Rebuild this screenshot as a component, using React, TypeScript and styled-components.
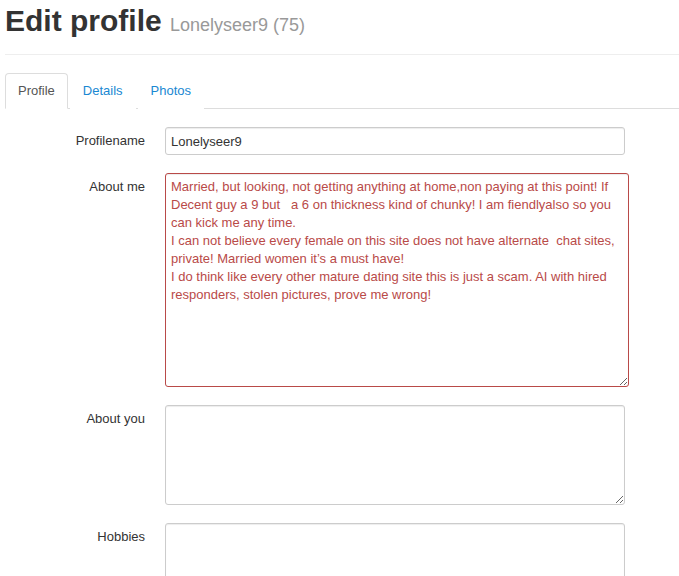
import React from "react";
import styled, { createGlobalStyle } from "styled-components";

const GlobalStyle = createGlobalStyle`
    html, body {
        margin: 0;
        padding: 0;
        background: #FFFFFF;
    }
    body {
        font-family: "Liberation Sans", Arial, sans-serif;
        font-size: 13px;
        line-height: 19px;
        color: #333333;
    }
`;

const Page = styled.div`
    padding: 0 0 0 5px;
    width: 674px;
    overflow: hidden;
`;

const Header = styled.div`
    border-bottom: 1px solid #EEEEEE;
    padding: 4px 0 12px 0;
    margin-bottom: 18px;
`;

const Title = styled.h1`
    margin: 0;
    font-size: 30px;
    line-height: 34px;
    font-weight: 700;
    color: #333333;
`;

const Sub = styled.small`
    font-size: 18px;
    font-weight: 400;
    color: #999999;
`;

const Tabs = styled.ul`
    list-style: none;
    margin: 0;
    padding: 0;
    display: flex;
    border-bottom: 1px solid #DDDDDD;
`;

const Tab = styled.li<{ $active?: boolean }>`
    margin-bottom: -1px;
    margin-right: 2px;
    padding: 7px 12px 8px 12px;
    font-size: 13px;
    line-height: 19px;
    border: 1px solid ${p => (p.$active ? "#DDDDDD" : "transparent")};
    border-bottom-color: ${p => (p.$active ? "#FFFFFF" : "transparent")};
    border-radius: 4px 4px 0 0;
    background: #FFFFFF;
    color: ${p => (p.$active ? "#555555" : "#1A88D2")};
    cursor: pointer;
`;

const Form = styled.form`
    display: flex;
    flex-direction: column;
    gap: 18px;
    padding-top: 18px;
`;

const Row = styled.div`
    display: grid;
    grid-template-columns: 140px auto;
    column-gap: 20px;
    align-items: start;
`;

const Label = styled.label`
    text-align: right;
    padding-top: 4px;
    font-size: 13px;
    line-height: 20px;
    color: #333333;
`;

const Input = styled.input`
    box-sizing: border-box;
    width: 460px;
    height: 28px;
    padding: 3px 5px;
    font-family: "Liberation Sans", Arial, sans-serif;
    font-size: 13px;
    color: #333333;
    border: 1px solid #CCCCCC;
    border-radius: 3px;
    box-shadow: inset 0 1px 1px rgba(0, 0, 0, 0.075);
    outline: none;
`;

const TextArea = styled.textarea<{ $error?: boolean; $w: number; $h: number }>`
    box-sizing: border-box;
    display: block;
    width: ${p => p.$w}px;
    height: ${p => p.$h}px;
    padding: 4px 5px;
    font-family: "Liberation Sans", Arial, sans-serif;
    font-size: 13px;
    line-height: 18px;
    color: ${p => (p.$error ? "#B94A48" : "#333333")};
    border: 1px solid ${p => (p.$error ? "#B94A48" : "#CCCCCC")};
    border-radius: 3px;
    box-shadow: inset 0 1px 1px rgba(0, 0, 0, 0.075);
    outline: none;
    margin: 0;
    overflow: hidden;
`;

const aboutMe =
    "Married, but looking, not getting anything at home,non paying at this point! If Decent guy a 9 but   a 6 on thickness kind of chunky! I am fiendlyalso so you can kick me any time.\n" +
    "I can not believe every female on this site does not have alternate  chat sites, private! Married women it\u2019s a must have!\n" +
    "I do think like every other mature dating site this is just a scam. AI with hired responders, stolen pictures, prove me wrong!";

export default function App(): React.JSX.Element {
    return (<>
        <GlobalStyle />
        <Page>
            <Header>
                <Title>Edit profile <Sub>Lonelyseer9 (75)</Sub></Title>
            </Header>
            <Tabs>
                <Tab $active>Profile</Tab>
                <Tab>Details</Tab>
                <Tab>Photos</Tab>
            </Tabs>
            <Form>
                <Row>
                    <Label>Profilename</Label>
                    <Input defaultValue="Lonelyseer9" />
                </Row>
                <Row>
                    <Label>About me</Label>
                    <TextArea $error $w={464} $h={214} defaultValue={aboutMe} />
                </Row>
                <Row>
                    <Label>About you</Label>
                    <TextArea $w={460} $h={100} />
                </Row>
                <Row>
                    <Label>Hobbies</Label>
                    <TextArea $w={460} $h={100} />
                </Row>
            </Form>
        </Page>
    </>)
}
